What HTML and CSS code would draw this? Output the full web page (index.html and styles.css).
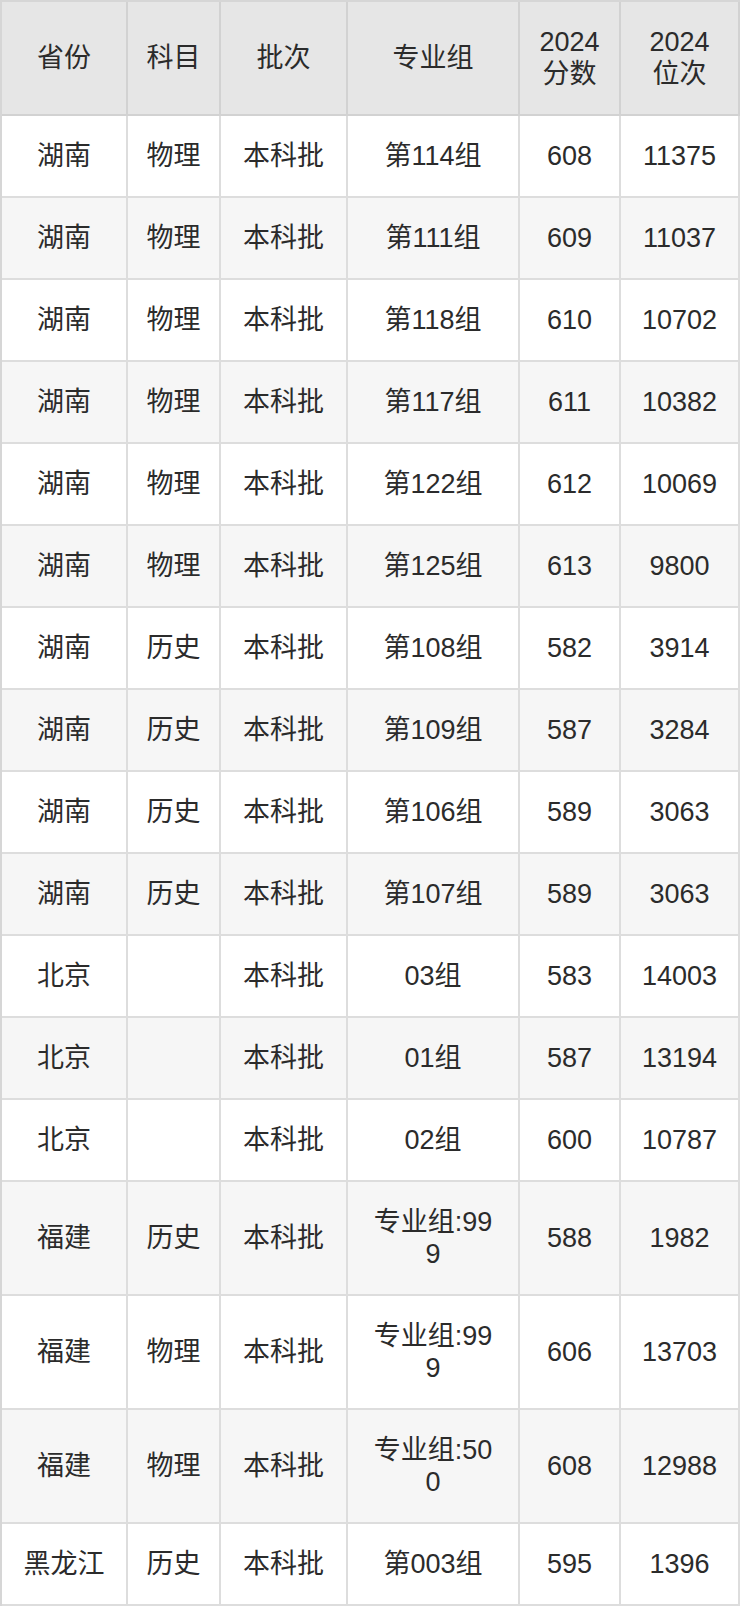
FILE: index.html
```html
<!DOCTYPE html>
<html lang="zh-CN">
<head>
<meta charset="utf-8">
<title>2024 分数位次</title>
<link rel="stylesheet" href="styles.css">
</head>
<body>
<table class="score-table">
  <colgroup>
    <col class="c-prov">
    <col class="c-subj">
    <col class="c-batch">
    <col class="c-group">
    <col class="c-score">
    <col class="c-rank">
  </colgroup>
  <thead>
    <tr>
      <th>省份</th>
      <th>科目</th>
      <th>批次</th>
      <th>专业组</th>
      <th>2024分数</th>
      <th>2024位次</th>
    </tr>
  </thead>
  <tbody>
    <tr><td>湖南</td><td>物理</td><td>本科批</td><td class="grp">第114组</td><td>608</td><td>11375</td></tr>
    <tr><td>湖南</td><td>物理</td><td>本科批</td><td class="grp">第111组</td><td>609</td><td>11037</td></tr>
    <tr><td>湖南</td><td>物理</td><td>本科批</td><td class="grp">第118组</td><td>610</td><td>10702</td></tr>
    <tr><td>湖南</td><td>物理</td><td>本科批</td><td class="grp">第117组</td><td>611</td><td>10382</td></tr>
    <tr><td>湖南</td><td>物理</td><td>本科批</td><td class="grp">第122组</td><td>612</td><td>10069</td></tr>
    <tr><td>湖南</td><td>物理</td><td>本科批</td><td class="grp">第125组</td><td>613</td><td>9800</td></tr>
    <tr><td>湖南</td><td>历史</td><td>本科批</td><td class="grp">第108组</td><td>582</td><td>3914</td></tr>
    <tr><td>湖南</td><td>历史</td><td>本科批</td><td class="grp">第109组</td><td>587</td><td>3284</td></tr>
    <tr><td>湖南</td><td>历史</td><td>本科批</td><td class="grp">第106组</td><td>589</td><td>3063</td></tr>
    <tr><td>湖南</td><td>历史</td><td>本科批</td><td class="grp">第107组</td><td>589</td><td>3063</td></tr>
    <tr><td>北京</td><td></td><td>本科批</td><td class="grp">03组</td><td>583</td><td>14003</td></tr>
    <tr><td>北京</td><td></td><td>本科批</td><td class="grp">01组</td><td>587</td><td>13194</td></tr>
    <tr><td>北京</td><td></td><td>本科批</td><td class="grp">02组</td><td>600</td><td>10787</td></tr>
    <tr><td>福建</td><td>历史</td><td>本科批</td><td class="grp">专业组:999</td><td>588</td><td>1982</td></tr>
    <tr><td>福建</td><td>物理</td><td>本科批</td><td class="grp">专业组:999</td><td>606</td><td>13703</td></tr>
    <tr><td>福建</td><td>物理</td><td>本科批</td><td class="grp">专业组:500</td><td>608</td><td>12988</td></tr>
    <tr><td>黑龙江</td><td>历史</td><td>本科批</td><td class="grp">第003组</td><td>595</td><td>1396</td></tr>
  </tbody>
</table>
</body>
</html>
```

FILE: styles.css
```css
html, body {
  margin: 0;
  padding: 0;
  background: #ffffff;
}

.score-table {
  width: 740px;
  table-layout: fixed;
  border-collapse: separate;
  border-spacing: 0;
  border-left: 2px solid #d6d6d6;
  border-top: 2px solid #d6d6d6;
  font-family: "Liberation Sans", "Noto Sans CJK SC", sans-serif;
  font-size: 27px;
  line-height: 32px;
  color: #2b2b2b;
}

.c-prov { width: 126px; }
.c-subj { width: 93px; }
.c-batch { width: 127px; }
.c-group { width: 172px; }
.c-score { width: 101px; }
.c-rank { width: 119px; }

.score-table th,
.score-table td {
  box-sizing: border-box;
  border-right: 2px solid #dddddd;
  border-bottom: 2px solid #dddddd;
  text-align: center;
  vertical-align: middle;
}

.score-table th {
  padding: 24px 18px;
  background: #e6e6e6;
  font-weight: normal;
  border-right-color: #d2d2d2;
  border-bottom-color: #d2d2d2;
}

.score-table td {
  padding: 24px 10px;
  background: #ffffff;
}

.score-table tbody tr:nth-child(even) td {
  background: #f6f6f6;
}

.score-table td.grp {
  padding-left: 22px;
  padding-right: 22px;
  word-break: break-all;
}
```
